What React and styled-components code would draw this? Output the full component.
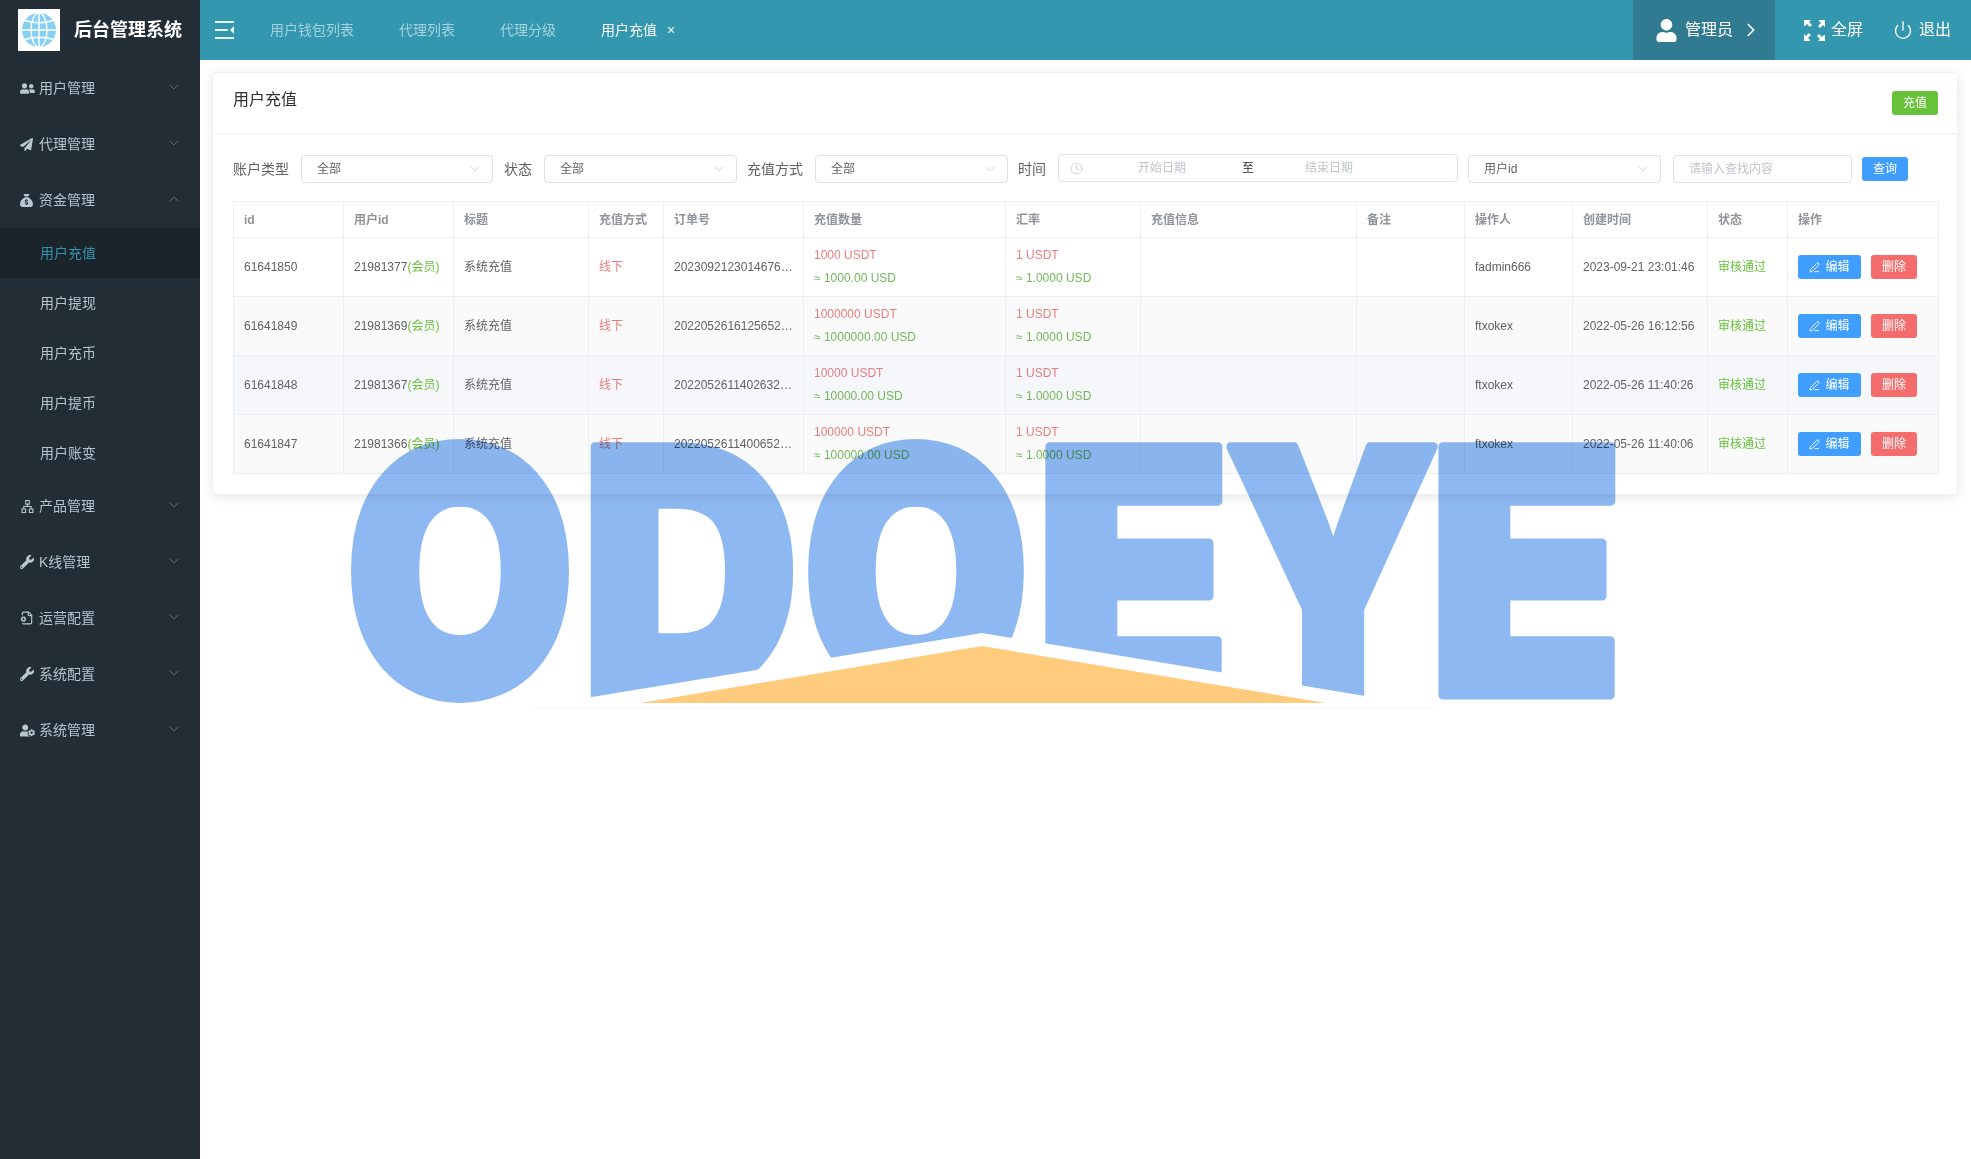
import React from "react";
import styled, { createGlobalStyle } from "styled-components";
import { ChevronDown, ChevronUp, ChevronRight, Power, Clock, PenLine } from "lucide-react";
import { FaUserFriends, FaPaperPlane, FaWrench, FaUser, FaUserCog } from "react-icons/fa";
import { FaSackDollar } from "react-icons/fa6";
import { AiOutlineApartment } from "react-icons/ai";
import { LuFileCog } from "react-icons/lu";

const FONT = `"Liberation Sans", "Noto Sans CJK SC", sans-serif`;

const Global = createGlobalStyle`
  html, body { margin: 0; padding: 0; background: #fff; }
  body { font-family: ${FONT}; font-size: 14px; line-height: 1.2; color: #606266; }
  * { box-sizing: border-box; }
`;

const Shell = styled.div`
  position: relative;
  display: flex;
  width: 1971px;
  height: 1159px;
  overflow: hidden;
`;

const Sidebar = styled.aside`
  width: 200px;
  flex: none;
  background: #222d36;
  color: #b3c5cf;
`;

const Brand = styled.div`
  height: 60px;
  display: flex;
  align-items: center;
  padding-left: 18px;
  gap: 14px;
`;

const BrandLogo = styled.div`
  width: 42px;
  height: 42px;
  background: #fff;
  display: flex;
  align-items: center;
  justify-content: center;
`;

const BrandName = styled.span`
  font-size: 18px;
  font-weight: 700;
  color: #fff;
  white-space: nowrap;
  margin-top: 2px;
`;

const MenuRow = styled.div`
  height: 56px;
  display: flex;
  align-items: center;
  padding: 0 20px;
  font-size: 14px;
  color: #b3c5cf;
`;

const MenuIcon = styled.span`
  width: 19px;
  flex: none;
  display: flex;
  align-items: center;
  color: #b8c8d0;
`;

const MenuLabel = styled.span`
  flex: 1;
  white-space: nowrap;
`;

const MenuCaret = styled.span`
  display: flex;
  margin-right: -2px;
  margin-top: -3px;
  color: #66737c;
`;

const SubRow = styled.div`
  height: 50px;
  display: flex;
  align-items: center;
  padding-left: 40px;
  font-size: 14px;
  color: ${(p) => (p.$active ? "#3295ad" : "#b3c5cf")};
  background: ${(p) => (p.$active ? "#1b242b" : "transparent")};
`;

const Main = styled.main`
  flex: 1;
  min-width: 0;
  display: flex;
  flex-direction: column;
`;

const TopBar = styled.header`
  height: 60px;
  flex: none;
  display: flex;
  align-items: center;
  background: #3297af;
  color: #fff;
`;

const Toggle = styled.span`
  display: flex;
  margin-left: 15px;
  margin-right: 36px;
`;

const Tabs = styled.nav`
  flex: 1;
  display: flex;
  align-items: center;
  gap: 45px;
`;

const Tab = styled.span`
  display: flex;
  align-items: center;
  gap: 10px;
  font-size: 14px;
  white-space: nowrap;
  color: ${(p) => (p.$active ? "#fff" : "#a6d2dd")};
`;

const TabClose = styled.span`
  font-size: 14px;
  line-height: 1;
`;

const AdminBlock = styled.div`
  width: 142px;
  height: 60px;
  display: flex;
  align-items: center;
  padding-left: 22px;
  gap: 7px;
  background: #317b92;
  font-size: 16px;
  white-space: nowrap;
`;

const ToolItem = styled.div`
  display: flex;
  align-items: center;
  gap: 6px;
  font-size: 16px;
  white-space: nowrap;
  margin-left: ${(p) => p.$left}px;
`;

const TopEnd = styled.div`
  width: 20px;
`;

const Card = styled.section`
  margin: 12px 13px 0 12px;
  background: #fff;
  border: 1px solid #f0f0f0;
  border-radius: 4px;
  box-shadow: 0 2px 12px rgba(0, 0, 0, 0.1);
`;

const CardHead = styled.div`
  height: 61px;
  display: flex;
  align-items: center;
  justify-content: space-between;
  padding: 0 19px 0 20px;
  border-bottom: 1px solid #ebeef5;
`;

const CardTitle = styled.h2`
  margin: -6px 0 0;
  font-size: 16px;
  font-weight: 400;
  color: #303133;
`;

const Btn = styled.button`
  height: 24px;
  width: ${(p) => p.$w}px;
  flex: none;
  border: 0;
  border-radius: 3px;
  padding: 0;
  display: inline-flex;
  align-items: center;
  justify-content: center;
  gap: 5px;
  font-family: ${FONT};
  font-size: 12px;
  line-height: 1.2;
  color: #fff;
  background: ${(p) => p.$bg};
`;

const CardBody = styled.div`
  padding: 21px 19px 20px 20px;
`;

const Filters = styled.div`
  display: flex;
  align-items: center;
  height: 28px;
  margin-bottom: 18px;
`;

const FilterLabel = styled.label`
  font-size: 14px;
  color: #606266;
  white-space: nowrap;
  margin-right: 12px;
`;

const Field = styled.div`
  width: ${(p) => p.$w}px;
  height: 28px;
  flex: none;
  display: flex;
  align-items: center;
  justify-content: space-between;
  padding: 0 10px 0 15px;
  margin-right: ${(p) => p.$mr}px;
  border: 1px solid #dcdfe6;
  border-radius: 4px;
  background: #fff;
  font-size: 12px;
  color: #606266;
`;

const Placeholder = styled.span`
  font-size: 12px;
  color: #c0c4cc;
  white-space: nowrap;
`;

const DateField = styled.div`
  position: relative;
  top: -1px;
  width: 400px;
  height: 28px;
  flex: none;
  display: grid;
  grid-template-columns: 68px 104px 12px 51px 48px;
  align-items: center;
  margin-right: 10px;
  padding-left: 11px;
  border: 1px solid #dcdfe6;
  border-radius: 4px;
  font-size: 12px;
  color: #303133;
`;

const Table = styled.table`
  width: 1705px;
  table-layout: fixed;
  border-collapse: collapse;
  font-size: 12px;
  line-height: 14px;
  color: #606266;
  border-top: 1px solid #ebeef5;
  border-left: 1px solid #ebeef5;
`;

const Th = styled.th`
  height: 36px;
  padding: 0 10px;
  text-align: left;
  font-weight: 700;
  color: #909399;
  border-right: 1px solid #ebeef5;
  border-bottom: 1px solid #ebeef5;
  white-space: nowrap;
`;

const Tr = styled.tr`
  background: ${(p) => p.$bg};
`;

const Td = styled.td`
  height: 59px;
  padding: 0 10px;
  border-right: 1px solid #ebeef5;
  border-bottom: 1px solid #ebeef5;
  white-space: nowrap;
  overflow: hidden;
  text-overflow: ellipsis;
  color: ${(p) => p.$color || "#606266"};
`;

const Member = styled.span`
  color: #67c23a;
`;

const Line = styled.div`
  line-height: 23px;
  color: ${(p) => p.$color};
`;

const Actions = styled.div`
  display: flex;
  gap: 10px;
`;

const Mark = styled.svg`
  position: absolute;
  left: 340px;
  top: 430px;
  width: 1300px;
  height: 290px;
  mix-blend-mode: multiply;
  pointer-events: none;
`;

const MarkLetter = styled.text`
  font-family: Inter, "Liberation Sans", sans-serif;
  font-weight: 900;
  font-size: 300px;
  fill: #8db8f2;
  stroke: #8db8f2;
  stroke-width: 8px;
  stroke-linejoin: round;
  text-anchor: middle;
`;

const GlobeLogo = () => (
  <svg width="36" height="36" viewBox="0 0 36 36" fill="none">
    <circle cx="18" cy="18" r="17" fill="#86d0f2" />
    <g stroke="#fff" strokeWidth="1.4">
      <ellipse cx="18" cy="18" rx="8" ry="17" />
      <path d="M18 1v34M1 18h34M4 8.500c8 3 20 3 28 0M4 27.500c8-3 20-3 28 0" />
    </g>
  </svg>
);

const ToggleIcon = () => (
  <svg width="19" height="18" viewBox="0 0 19 18" fill="#e4f4f8">
    <rect x="0" y="0" width="19" height="2" />
    <rect x="0" y="8" width="13" height="2" />
    <rect x="0" y="16" width="19" height="2" />
    <path d="M19 5v8l-4-4z" />
  </svg>
);

const FullIcon = () => (
  <svg width="21" height="21" viewBox="0 0 21 21" fill="#fff">
    <path d="M0 0h7L5 2l3 3-2 2-3-3-2 2-1 0zM21 0v7l-2-2-3 3-2-2 3-3-2-2 0-1zM0 21v-7l2 2 3-3 2 2-3 3 2 2 0 1zM21 21h-7l2-2-3-3 2-2 3 3 2-2 1 0z" />
  </svg>
);

const menuTop = [
  ["用户管理", <FaUserFriends size={15} />],
  ["代理管理", <FaPaperPlane size={13} />],
  ["资金管理", <FaSackDollar size={13} />, true],
];

const menuBottom = [
  ["产品管理", <AiOutlineApartment size={15} />],
  ["K线管理", <FaWrench size={14} />],
  ["运营配置", <LuFileCog size={14} />],
  ["系统配置", <FaWrench size={14} />],
  ["系统管理", <FaUserCog size={15} />],
];

const subs = ["用户充值", "用户提现", "用户充币", "用户提币", "用户账变"];
const tabs = ["用户钱包列表", "代理列表", "代理分级"];

const columns = [
  ["id", 110], ["用户id", 110], ["标题", 135], ["充值方式", 75], ["订单号", 140],
  ["充值数量", 202], ["汇率", 135], ["充值信息", 216], ["备注", 108], ["操作人", 108],
  ["创建时间", 135], ["状态", 80], ["操作", 151],
];

const rows = [
  { id: "61641850", uid: "21981377", order: "2023092123014676123", qty: "1000", usd: "1000.00", op: "fadmin666", at: "2023-09-21 23:01:46", bg: "#fff" },
  { id: "61641849", uid: "21981369", order: "2022052616125652123", qty: "1000000", usd: "1000000.00", op: "ftxokex", at: "2022-05-26 16:12:56", bg: "#fafafa" },
  { id: "61641848", uid: "21981367", order: "2022052611402632123", qty: "10000", usd: "10000.00", op: "ftxokex", at: "2022-05-26 11:40:26", bg: "#f5f7fa" },
  { id: "61641847", uid: "21981366", order: "2022052611400652123", qty: "100000", usd: "100000.00", op: "ftxokex", at: "2022-05-26 11:40:06", bg: "#fafafa" },
];

const letters = [
  ["O", 460, 0.99], ["D", 690, 1.01], ["O", 916, 0.98],
  ["E", 1133, 1.07], ["Y", 1332, 0.93], ["E", 1526, 1.07],
];

const RED = "#e5807f";
const GREEN = "#72b85a";

const Select = ({ w, mr, children }) => (
  <Field $w={w} $mr={mr}>
    {children}
    <ChevronDown size={14} color="#c0c4cc" strokeWidth={1.4} />
  </Field>
);

const Menu = ({ item }) => (
  <MenuRow>
    <MenuIcon>{item[1]}</MenuIcon>
    <MenuLabel>{item[0]}</MenuLabel>
    <MenuCaret>
      {item[2] ? <ChevronUp size={16} strokeWidth={1.3} /> : <ChevronDown size={16} strokeWidth={1.3} />}
    </MenuCaret>
  </MenuRow>
);

export default function App() {
  return (
    <Shell>
      <Global />
      <Sidebar>
        <Brand>
          <BrandLogo><GlobeLogo /></BrandLogo>
          <BrandName>后台管理系统</BrandName>
        </Brand>
        {menuTop.map((m) => <Menu key={m[0]} item={m} />)}
        {subs.map((s, i) => <SubRow key={s} $active={i === 0}>{s}</SubRow>)}
        {menuBottom.map((m) => <Menu key={m[0]} item={m} />)}
      </Sidebar>
      <Main>
        <TopBar>
          <Toggle><ToggleIcon /></Toggle>
          <Tabs>
            {tabs.map((t) => <Tab key={t}>{t}</Tab>)}
            <Tab $active>用户充值<TabClose>×</TabClose></Tab>
          </Tabs>
          <AdminBlock>
            <FaUser size={23} />
            管理员
            <ChevronRight size={22} strokeWidth={1.8} />
          </AdminBlock>
          <ToolItem $left={29}><FullIcon />全屏</ToolItem>
          <ToolItem $left={30}><Power size={20} strokeWidth={1.6} />退出</ToolItem>
          <TopEnd />
        </TopBar>
        <Card>
          <CardHead>
            <CardTitle>用户充值</CardTitle>
            <Btn $w={46} $bg="#67c23a">充值</Btn>
          </CardHead>
          <CardBody>
            <Filters>
              <FilterLabel>账户类型</FilterLabel>
              <Select w={192} mr={11}>全部</Select>
              <FilterLabel>状态</FilterLabel>
              <Select w={193} mr={10}>全部</Select>
              <FilterLabel>充值方式</FilterLabel>
              <Select w={193} mr={10}>全部</Select>
              <FilterLabel>时间</FilterLabel>
              <DateField>
                <Clock size={13} color="#c0c4cc" strokeWidth={1.4} />
                <Placeholder>开始日期</Placeholder>
                <span>至</span>
                <span />
                <Placeholder>结束日期</Placeholder>
              </DateField>
              <Select w={193} mr={12}>用户id</Select>
              <Field $w={179} $mr={10}><Placeholder>请输入查找内容</Placeholder></Field>
              <Btn $w={46} $bg="#409eff">查询</Btn>
            </Filters>
            <Table>
              <colgroup>
                {columns.map(([name, w]) => <col key={name} width={w} />)}
              </colgroup>
              <thead>
                <tr>{columns.map(([name]) => <Th key={name}>{name}</Th>)}</tr>
              </thead>
              <tbody>
                {rows.map((r) => (
                  <Tr key={r.id} $bg={r.bg}>
                    <Td>{r.id}</Td>
                    <Td>{r.uid}<Member>(会员)</Member></Td>
                    <Td>系统充值</Td>
                    <Td $color={RED}>线下</Td>
                    <Td>{r.order}</Td>
                    <Td>
                      <Line $color={RED}>{r.qty} USDT</Line>
                      <Line $color={GREEN}>≈ {r.usd} USD</Line>
                    </Td>
                    <Td>
                      <Line $color={RED}>1 USDT</Line>
                      <Line $color={GREEN}>≈ 1.0000 USD</Line>
                    </Td>
                    <Td />
                    <Td />
                    <Td>{r.op}</Td>
                    <Td>{r.at}</Td>
                    <Td $color="#67c23a">审核通过</Td>
                    <Td>
                      <Actions>
                        <Btn $w={63} $bg="#409eff"><PenLine size={11} />编辑</Btn>
                        <Btn $w={46} $bg="#f56c6c">删除</Btn>
                      </Actions>
                    </Td>
                  </Tr>
                ))}
              </tbody>
            </Table>
          </CardBody>
        </Card>
      </Main>
      <Mark viewBox="340 430 1300 290">
        {letters.map(([ch, x, sx]) => (
          <MarkLetter key={x} transform={`translate(${x} 695) scale(${sx} 1.137)`}>
            {ch}
          </MarkLetter>
        ))}
        <polygon points="531,707 982,633 1432,707" fill="#fff" />
        <line x1="531" y1="707.500" x2="1436" y2="707.500" stroke="#f6f6f6" />
        <polygon points="640,703 982,646 1326,703" fill="#ffcb7d" />
      </Mark>
    </Shell>
  );
}
